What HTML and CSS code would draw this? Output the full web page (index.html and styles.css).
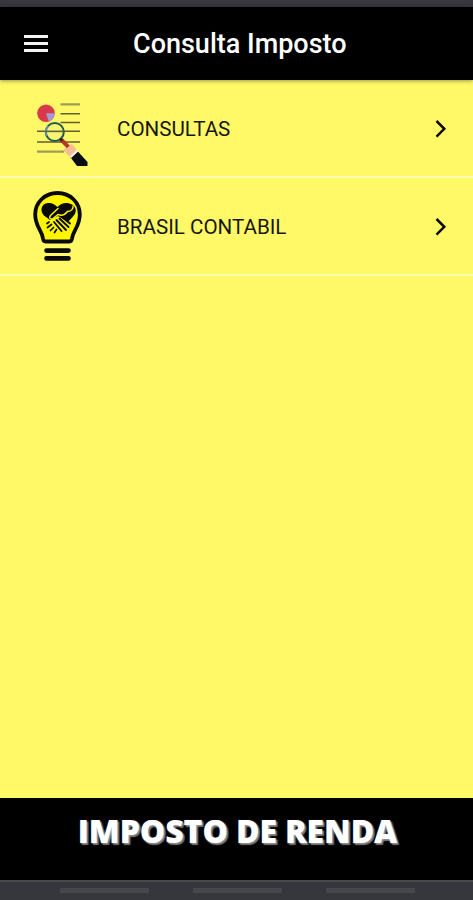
FILE: index.html
```html
<!DOCTYPE html>
<html lang="pt-BR">

<head>
    <meta charset="utf-8">
    <meta name="viewport" content="width=device-width, initial-scale=1">
    <title>Consulta Imposto</title>
    <link rel="stylesheet" href="styles.css">
</head>

<body>

    <div class="status-bar"></div>

    <!-- Top toolbar -->
    <header class="toolbar">
        <button class="menu-button" aria-label="Menu">
            <span></span>
            <span></span>
            <span></span>
        </button>
        <h1>Consulta Imposto</h1>
    </header>

    <!-- Menu list -->
    <main class="content">
        <a class="item" href="#">
            <svg class="item-icon" viewBox="0 -2 90 90">
                <g stroke="#a09c55" stroke-width="2.3">
                    <path d="M40.5 14.3H60M17 61.7H44" />
                    <path d="M40.5 23.7H60M40.5 32.5H60M17 41.3H60M17 52H60" stroke="#615e3b" stroke-width="1.5" />
                </g>
                <circle cx="26" cy="23.3" r="8.8" fill="#d93a4b" />
                <path d="M26 23.3h8.6c0 4-2.6 7-6 8z" fill="#a49bd6" />
                <circle cx="34.8" cy="42" r="9" fill="#e9f28a" fill-opacity=".35" stroke="#235b4c" stroke-width="2" />
                <path d="M27 46a9 9 0 0 1 1-10" fill="none" stroke="#5a93c4" stroke-width="1.5" />
                <path d="M25.5 41.5H44" stroke="#615e3b" stroke-width="1.3" />
                <path d="M43 60l9-6 5 6-7 7z" fill="#f5bd94" />
                <path d="M41 49.5l7.3 7.3" stroke="#b7352b" stroke-width="4" />
                <path d="M39.8 48.5l2.5 2.5" stroke="#3c2524" stroke-width="3" />
                <path d="M57 60.5L67.500 72v4H57L50.3 67z" fill="#0b0b12" />
                <path d="M57 59.500l-7 7 1.200 1.600 7-6.600z" fill="#f8f7f0" />
            </svg>
            <span class="item-label">CONSULTAS</span>
            <svg class="chevron" viewBox="0 0 12 20">
                <path d="M1.5 2l7.8 7.8-7.8 7.8" />
            </svg>
        </a>

        <a class="item" href="#">
            <svg class="item-icon" viewBox="0 6 90 90">
                <!-- bulb -->
                <path d="M25.5 61.5c-1.500 0-2.200-1-2.500-3-1-8-7.800-12-7.800-24 0-12 9.500-21.500 22.300-21.500s22.300 9.500 22.300 21.500c0 12-6.800 16-7.800 24-.3 2-1 3-2.500 3z" fill="#fcf500" stroke="#0a0a02" stroke-width="3.8" />
                <path d="M26.500 70.600h22M26.500 78.400h22" stroke="#0a0a02" stroke-width="4.600" stroke-linecap="round" />
                <!-- hands forming a heart -->
                <path d="M26 37c-6-3.500-6.500-13 2-14 4-.5 7 1.500 9.500 4 3-3 6-4.500 10-4 8 1 11 8 5.500 13.500L48 42 38 36l-8 4z" fill="#0a0a02" />
                <path d="M38.500 28l-8 7.500c-2 2.500 0 4.500 2.500 3l5-4c5 2 8-1 9.500-3 4 0 6-3 5.500-6" fill="none" stroke="#fcf500" stroke-width="1.400" />
                <g fill="none" stroke="#0a0a02" stroke-width="1.900" stroke-linecap="round">
                    <path d="M42 37l8 6.500M39.500 38.500l9 8.500M36.500 40l9.500 10M34 42l7.500 9" />
                    <path d="M29 42l-2 1.500M31.500 44.500l-4 3M33.500 47.500l-3 3M36.500 49.500l-2 3" stroke-width="1.700" />
                </g>
            </svg>
            <span class="item-label">BRASIL CONTABIL</span>
            <svg class="chevron" viewBox="0 0 12 20">
                <path d="M1.5 2l7.8 7.8-7.8 7.8" />
            </svg>
        </a>
    </main>

    <footer class="banner">IMPOSTO DE RENDA</footer>

    <!-- System navigation -->
    <div class="nav-bar">
        <span></span>
        <span></span>
        <span></span>
    </div>

</body>

</html>
```
FILE: styles.css
```css
* {
    box-sizing: border-box;
}

body {
    margin: 0;
    height: 100vh;
    display: flex;
    flex-direction: column;
    overflow: hidden;
    font-family: Roboto, sans-serif;
    background-color: #fff968;
}

.status-bar {
    height: 7px;
    background-color: #38373e;
}

/* Top toolbar */
.toolbar {
    height: 73px;
    display: flex;
    align-items: center;
    padding-left: 24px;
    background-color: #000;
    color: #fff;
    box-shadow: 0 1px 4px rgba(0, 0, 0, 0.4);
}

.menu-button {
    display: flex;
    flex-direction: column;
    gap: 4px;
    width: 24px;
    margin: 0 85px 0 0;
    padding: 0;
    border: none;
    background: none;
    cursor: pointer;
}

.menu-button span {
    height: 3px;
    background-color: #f4f4f4;
}

.toolbar h1 {
    margin: 0;
    font-size: 27px;
    font-weight: 500;
    line-height: 32px;
    white-space: nowrap;
}

/* Menu list */
.content {
    flex: 1;
}

.item {
    height: 98px;
    display: flex;
    align-items: center;
    padding: 2px 26px 0 20px;
    border-bottom: 2px solid #fffbb0;
    color: #17160c;
    text-decoration: none;
}

.item-icon {
    width: 90px;
    height: 90px;
    margin-top: 8px;
}

.item-label {
    flex: 1;
    margin-left: 7px;
    font-size: 20.6px;
}

.chevron {
    width: 12px;
    height: 20px;
    fill: none;
    stroke: #0c0b04;
    stroke-width: 2.5;
}

/* Bottom banner */
.banner {
    height: 82px;
    padding: 11px 0 0 2px;
    background-color: #000;
    color: #fff;
    font-family: "Open Sans", sans-serif;
    font-size: 32px;
    font-weight: 800;
    line-height: 44px;
    letter-spacing: -0.1px;
    text-align: center;
    text-shadow: 1px 1px 2px #999, 2px 2px 1px #666;
}

/* System navigation */
.nav-bar {
    height: 20px;
    display: flex;
    justify-content: center;
    gap: 44px;
    padding: 6px 0 0 2px;
    border-top: 2px solid #49494b;
    background-color: #36373c;
}

.nav-bar span {
    width: 89px;
    height: 5px;
    background-color: #46474a;
}
```
